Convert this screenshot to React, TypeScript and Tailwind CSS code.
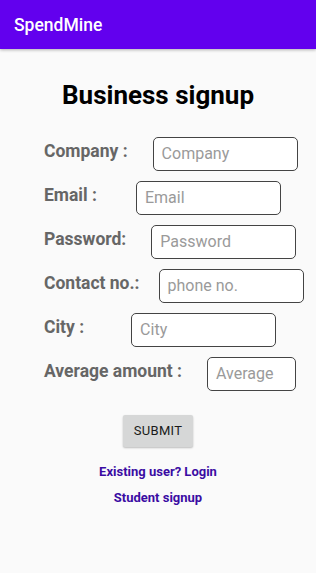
import React from "react";

const rows = [
  { label: "Company :", ph: "Company", ml: "ml-[25px]", w: "w-[145px]" },
  { label: "Email :", ph: "Email", ml: "ml-[39px]", w: "w-[145px]" },
  { label: "Password:", ph: "Password", ml: "ml-[25px]", w: "w-[145px]" },
  { label: "Contact no.:", ph: "phone no.", ml: "ml-[19px]", w: "w-[145px]" },
  { label: "City :", ph: "City", ml: "ml-[47px]", w: "w-[145px]" },
  { label: "Average amount :", ph: "Average", ml: "ml-[25px]", w: "w-[89px]" },
];

export default function App() {
  return (
    <div className="w-[316px] h-[573px] bg-[#fafafa] flex flex-col" style={{ fontFamily: "Roboto, 'Liberation Sans', sans-serif" }}>
      <div className="h-[49px] bg-[#6200ee] flex items-center px-[14px] pt-[2px] shadow-[0_1px_3px_rgba(0,0,0,0.3)] shrink-0">
        <span className="text-white text-[17.5px] font-medium">SpendMine</span>
      </div>
      <h1 className="text-center text-[26px] font-bold text-black mt-[29px] leading-[34px]">Business signup</h1>
      <div className="flex flex-col mt-[25px] pl-[44px] gap-[10px]">
        {rows.map((r) => (
          <div key={r.label} className="flex items-center h-[34px]">
            <span className="text-[17.5px] font-bold text-[#666666] -mt-[6px] whitespace-nowrap">{r.label}</span>
            <div className={`${r.ml} ${r.w} h-[34px] border-[1.5px] border-[#444] rounded-[5px] bg-white flex items-center px-[8px] shrink-0`}>
              <span className="text-[16px] text-[#9a9a9a]">{r.ph}</span>
            </div>
          </div>
        ))}
      </div>
      <div className="flex justify-center mt-[24px]">
        <div className="w-[70px] h-[32px] bg-[#d6d7d7] rounded-[2px] shadow-[0_1px_2px_rgba(0,0,0,0.25)] flex items-center justify-center text-[13px] font-normal text-[#1a1a1a] tracking-[0.3px]">SUBMIT</div>
      </div>
      <div className="text-center mt-[16px] text-[13px] leading-[18px] font-bold text-[#3a0ca3]">Existing user? Login</div>
      <div className="text-center mt-[8px] text-[13px] leading-[18px] font-bold text-[#3a0ca3]">Student signup</div>
    </div>
  );
}
